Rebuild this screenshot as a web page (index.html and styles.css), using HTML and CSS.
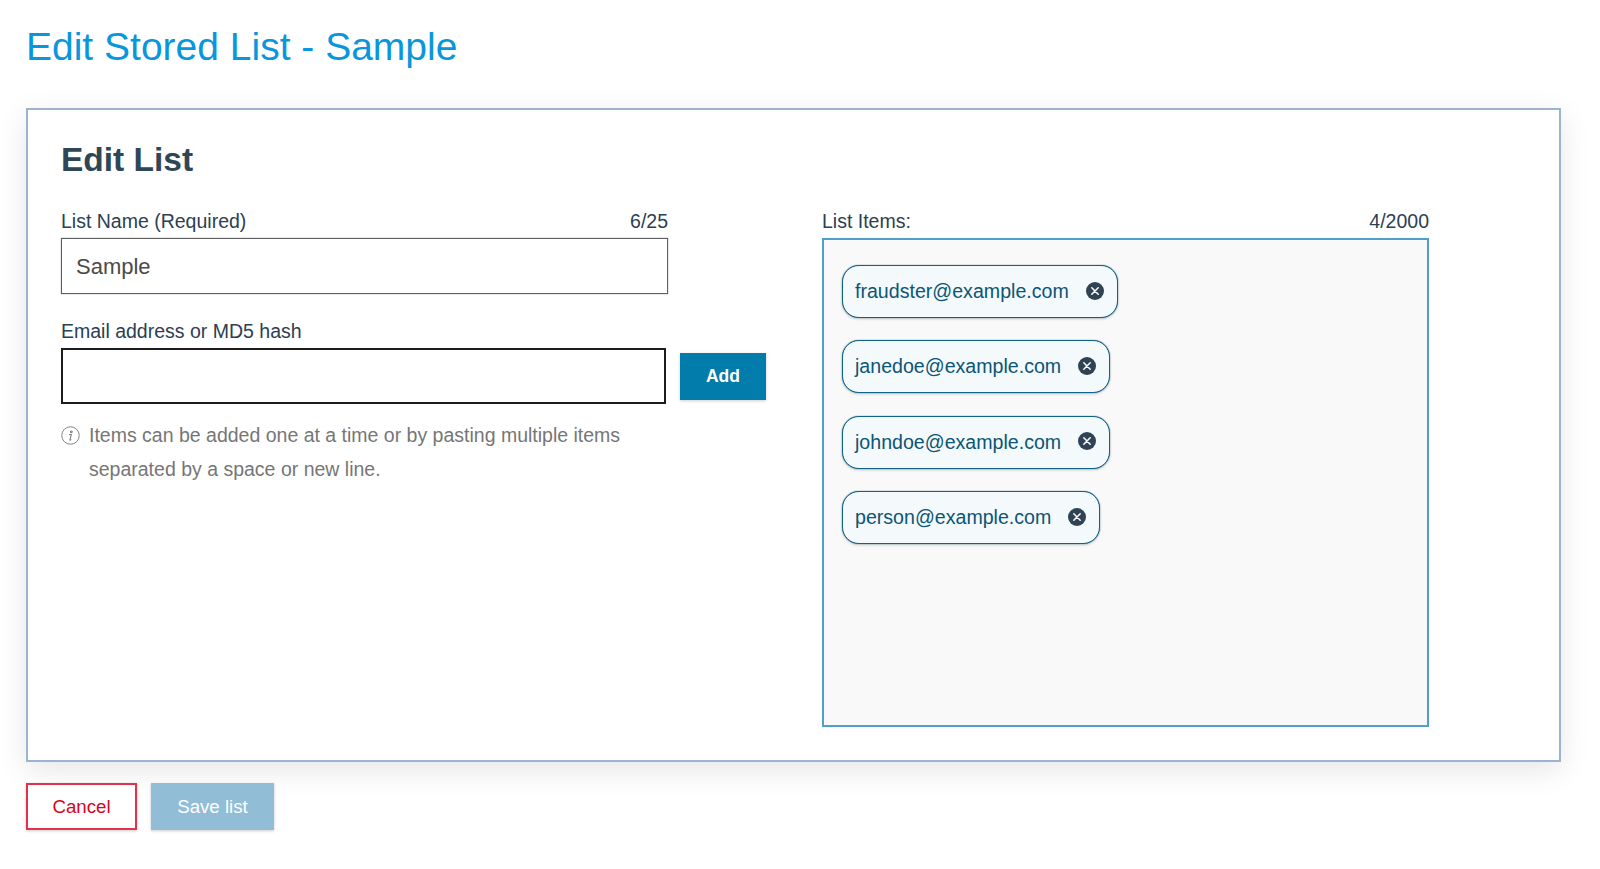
FILE: index.html
```html
<!DOCTYPE html>
<html lang="en">
<head>
<meta charset="utf-8">
<title>Edit Stored List - Sample</title>
<link rel="stylesheet" href="styles.css">
</head>
<body>
<h1 class="page-title">Edit Stored List - Sample</h1>
<section class="card">
  <h2 class="card-title">Edit List</h2>
  <div class="columns">
    <div class="col-left">
      <div class="label-row name-field"><label for="name">List Name (Required)</label><span>6/25</span></div>
      <input id="name" class="name-input" type="text" value="Sample">
      <div class="label-row email-label"><label for="email">Email address or MD5 hash</label></div>
      <div class="add-row">
        <input id="email" class="email-input" type="text">
        <button class="btn-add" type="button">Add</button>
      </div>
      <div class="hint">
        <svg class="hint-icon" viewBox="0 0 20 20" aria-hidden="true"><circle cx="10" cy="10" r="9.2" fill="none" stroke="#7d7d7d" stroke-width="1"/><path d="M10.9 5.2a.9.9 0 1 1-.01 0zM8.5 8.9h2.4l-1.5 5.6c-.1.4.1.6.7.3l.8-.5" fill="none" stroke="#7d7d7d" stroke-width="1.1"/></svg>
        <p>Items can be added one at a time or by pasting multiple items separated by a space or new line.</p>
      </div>
    </div>
    <div class="col-right">
      <div class="label-row"><label>List Items:</label><span>4/2000</span></div>
      <div class="items-box">
        <div class="chip"><span>fraudster@example.com</span><svg class="chip-x" viewBox="0 0 18 18" aria-hidden="true"><circle cx="9" cy="9" r="9" fill="#2f4354"/><path d="M5.8 5.8l6.4 6.4M12.2 5.8l-6.4 6.4" stroke="#fff" stroke-width="1.5" stroke-linecap="round"/></svg></div>
        <div class="chip"><span>janedoe@example.com</span><svg class="chip-x" viewBox="0 0 18 18" aria-hidden="true"><circle cx="9" cy="9" r="9" fill="#2f4354"/><path d="M5.8 5.8l6.4 6.4M12.2 5.8l-6.4 6.4" stroke="#fff" stroke-width="1.5" stroke-linecap="round"/></svg></div>
        <div class="chip"><span>johndoe@example.com</span><svg class="chip-x" viewBox="0 0 18 18" aria-hidden="true"><circle cx="9" cy="9" r="9" fill="#2f4354"/><path d="M5.8 5.8l6.4 6.4M12.2 5.8l-6.4 6.4" stroke="#fff" stroke-width="1.5" stroke-linecap="round"/></svg></div>
        <div class="chip"><span>person@example.com</span><svg class="chip-x" viewBox="0 0 18 18" aria-hidden="true"><circle cx="9" cy="9" r="9" fill="#2f4354"/><path d="M5.8 5.8l6.4 6.4M12.2 5.8l-6.4 6.4" stroke="#fff" stroke-width="1.5" stroke-linecap="round"/></svg></div>
      </div>
    </div>
  </div>
</section>
<div class="actions">
  <button class="btn-cancel" type="button">Cancel</button>
  <button class="btn-save" type="button">Save list</button>
</div>
</body>
</html>
```

FILE: styles.css
```css
* { box-sizing: border-box; }
html, body { margin: 0; padding: 0; background: #fff; }
body {
  padding: 23px 39px 0 26px;
  font-family: "Liberation Sans", Arial, sans-serif;
  color: #2b4053;
  height: 869px;
  overflow: hidden;
}
.page-title {
  margin: 0 0 38px;
  font-size: 39px;
  line-height: 47px;
  font-weight: 400;
  color: #0a96dd;
}
.card {
  height: 654px;
  padding: 30px 33px 0;
  background: #fff;
  border: 2px solid #9db4d0;
  box-shadow: 0 8px 28px rgba(0, 0, 0, 0.1);
}
.card-title {
  margin: 0 0 30px;
  font-size: 33.5px;
  line-height: 40px;
  font-weight: 700;
  color: #2f4656;
}
.columns {
  display: grid;
  grid-template-columns: 705px 607px;
  column-gap: 56px;
}
.label-row {
  display: flex;
  justify-content: space-between;
  font-size: 19.5px;
  line-height: 22px;
  height: 28px;
  color: #2b4053;
}
.col-left .label-row { width: 607px; }
input {
  display: block;
  font-family: inherit;
  background: #fff;
  outline: none;
}
.name-input {
  width: 607px;
  height: 56px;
  padding: 1px 14px 0;
  font-size: 22px;
  color: #4a4a4a;
  border: 1px solid #5f5f5f;
  box-shadow: 0 0 1px #777;
}
.email-label { margin-top: 26px; }
.add-row {
  display: flex;
  align-items: center;
  column-gap: 14px;
}
.email-input {
  width: 605px;
  height: 56px;
  border: 2px solid #1c1c1c;
}
.btn-add {
  width: 86px;
  height: 47px;
  border: 0;
  background: #017cab;
  color: #fff;
  font: 700 17.5px "Liberation Sans", Arial, sans-serif;
  box-shadow: 0 1px 3px rgba(0, 0, 0, 0.2);
}
.hint {
  display: flex;
  column-gap: 9px;
  margin-top: 14px;
  width: 575px;
  color: #767676;
  font-size: 19.5px;
  line-height: 34px;
}
.hint-icon { flex: none; width: 19px; height: 19px; margin-top: 8px; }
.hint p { margin: 0; }
.items-box {
  display: flex;
  flex-direction: column;
  align-items: flex-start;
  row-gap: 22.4px;
  height: 489px;
  padding: 25px 18px;
  background: #f9f9f9;
  border: 2px solid #4f9fc9;
}
.chip {
  display: flex;
  align-items: center;
  column-gap: 17px;
  height: 53px;
  padding: 0 13px 0 12px;
  background: #f4f9fb;
  border: 1px solid #0f6288;
  border-radius: 17px;
  font-size: 19.6px;
  color: #0b5576;
  box-shadow: 0 0 1px #0f6288, 0 1px 3px rgba(0, 0, 0, 0.2);
}
.chip-x { flex: none; width: 18px; height: 18px; margin-bottom: 2px; }
.actions {
  display: flex;
  column-gap: 14px;
  margin-top: 21px;
}
.actions button {
  height: 47px;
  font: 400 18.7px "Liberation Sans", Arial, sans-serif;
  box-shadow: 0 1px 3px rgba(0, 0, 0, 0.2);
}
.btn-cancel {
  width: 111px;
  background: #fff;
  color: #d9031c;
  border: 2px solid #e0324a;
}
.btn-save {
  width: 123px;
  background: #91bdd6;
  color: #fff;
  border: 0;
}
```
